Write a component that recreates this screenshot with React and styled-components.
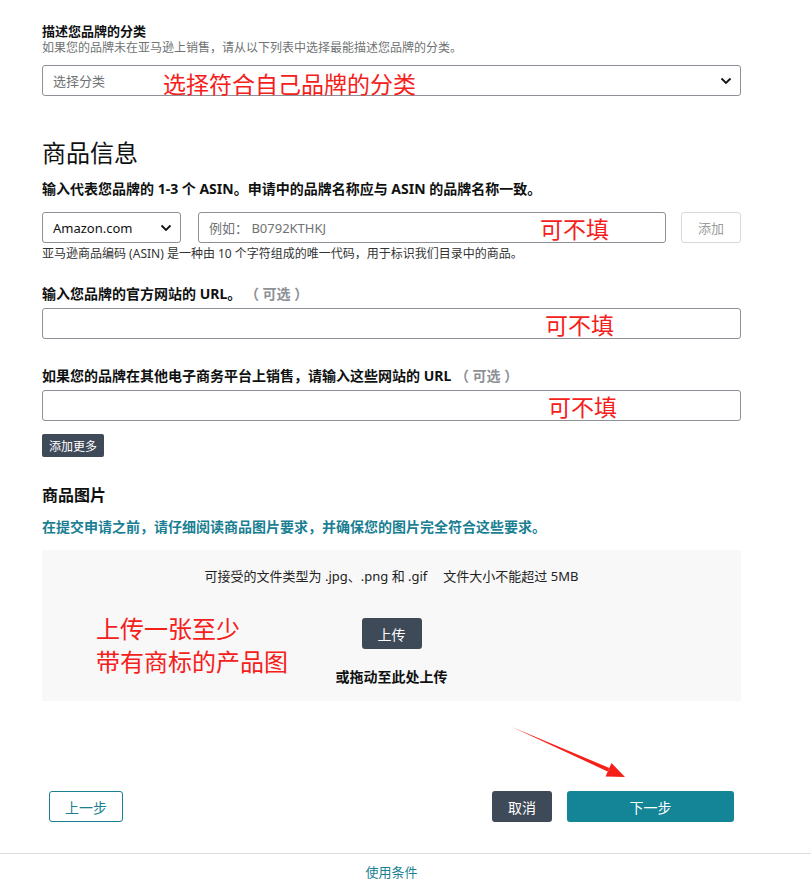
import React from 'react';
import styled, { createGlobalStyle } from 'styled-components';

const GlobalStyle = createGlobalStyle`
  body {
    margin: 0;
    background: #fff;
    color: #0f1111;
    font-family: 'Noto Sans', 'Noto Sans CJK SC', sans-serif;
  }
`;

const Chevron = () => (
  <svg width="12" height="8" viewBox="0 0 12 8">
    <path d="M1.5 1.5 L6 6 L10.5 1.5" fill="none" stroke="#111" strokeWidth="1.8" />
  </svg>
);

const App = () => (
  <Root>
    <GlobalStyle />
    <Page>
      <Label $size={13}>描述您品牌的分类</Label>
      <Help>如果您的品牌未在亚马逊上销售，请从以下列表中选择最能描述您品牌的分类。</Help>
      <Select $mt={9}>
        <Placeholder>选择分类</Placeholder>
        <Chevron />
        <Note $left={120} $top={4}>选择符合自己品牌的分类</Note>
      </Select>

      <Heading>商品信息</Heading>
      <Label $mt={11}>输入代表您品牌的 1-3 个 ASIN。申请中的品牌名称应与 ASIN 的品牌名称一致。</Label>
      <AsinRow>
        <Select $width={139}>
          <span>Amazon.com</span>
          <Chevron />
        </Select>
        <Input>
          <Placeholder>例如： B0792KTHKJ</Placeholder>
          <Note $left={341} $top={2}>可不填</Note>
        </Input>
        <GhostButton>添加</GhostButton>
      </AsinRow>
      <Help $mt={3} $dark>亚马逊商品编码 (ASIN) 是一种由 10 个字符组成的唯一代码，用于标识我们目录中的商品。</Help>

      <Label $mt={23}>输入您品牌的官方网站的 URL。 <Optional>（ 可选 ）</Optional></Label>
      <Input $mt={6}>
        <Note $left={502} $top={2}>可不填</Note>
      </Input>

      <Label $mt={28}>如果您的品牌在其他电子商务平台上销售，请输入这些网站的 URL <Optional>（ 可选 ）</Optional></Label>
      <Input $mt={6}>
        <Note $left={505} $top={2}>可不填</Note>
      </Input>
      <SmallDark>添加更多</SmallDark>

      <SubHeading>商品图片</SubHeading>
      <LinkText>在提交申请之前，请仔细阅读商品图片要求，并确保您的图片完全符合这些要求。</LinkText>

      <DropZone>
        <DropInfo>
          <span>可接受的文件类型为 .jpg、.png 和 .gif</span>
          <span>文件大小不能超过 5MB</span>
        </DropInfo>
        <UploadButton>上传</UploadButton>
        <DropHint>或拖动至此处上传</DropHint>
        <BoxNote>上传一张至少<br />带有商标的产品图</BoxNote>
      </DropZone>

      <Actions>
        <OutlineButton>上一步</OutlineButton>
        <RightGroup>
          <DarkButton>取消</DarkButton>
          <PrimaryButton>下一步</PrimaryButton>
        </RightGroup>
      </Actions>
    </Page>

    <Footer>
      <FooterInner>
        <FooterLink>使用条件</FooterLink>
      </FooterInner>
    </Footer>

    <Arrow width="811" height="892" viewBox="0 0 811 892">
      <polygon points="512,727 609.4,768 607.6,771.4" fill="#f5201a" />
      <polygon points="625,777 605.5,776.5 611.5,763" fill="#f5201a" />
    </Arrow>
  </Root>
);

export default App;

const Root = styled.div`
  position: relative;
  width: 811px;
  min-height: 892px;
`;

const Page = styled.div`
  width: 699px;
  margin-left: 42px;
  padding-top: 23px;
`;

const Label = styled.div`
  margin-top: ${({ $mt }) => $mt || 0}px;
  font-size: ${({ $size }) => $size || 14}px;
  line-height: 17px;
  font-weight: 700;
  color: #0f1111;
  white-space: nowrap;
`;

const Optional = styled.span`
  font-weight: 700;
  color: #8d9096;
`;

const Help = styled.div`
  margin-top: ${({ $mt }) => $mt || 0}px;
  font-size: 12px;
  line-height: 16px;
  color: ${({ $dark }) => ($dark ? '#333' : '#6f7373')};
`;

const Field = styled.div`
  position: relative;
  box-sizing: border-box;
  height: 31px;
  margin-top: ${({ $mt }) => $mt || 0}px;
  border: 1px solid #8d9096;
  border-radius: 3px;
  background: #fff;
  display: flex;
  align-items: center;
  padding: 0 10px;
  font-size: 13px;
  color: #0f1111;
`;

const Select = styled(Field)`
  width: ${({ $width }) => ($width ? `${$width}px` : '100%')};
  flex: none;
  justify-content: space-between;
  padding-right: 8px;
`;

const Input = styled(Field)`
  flex: 1;
`;

const Placeholder = styled.span`
  color: #6f7373;
`;

const Note = styled.span`
  position: absolute;
  left: ${({ $left }) => $left}px;
  top: ${({ $top }) => $top}px;
  font-size: 23px;
  line-height: 26px;
  color: #f5201a;
  font-family: 'Noto Sans CJK SC', sans-serif;
  white-space: nowrap;
`;

const Heading = styled.h2`
  margin: 41px 0 0;
  font-size: 24px;
  line-height: 32px;
  font-weight: 400;
  color: #0f1111;
`;

const AsinRow = styled.div`
  margin-top: 15px;
  display: flex;
  gap: 17px;

  & > button {
    margin-left: -2px;
  }
`;

const GhostButton = styled.button`
  width: 60px;
  height: 31px;
  flex: none;
  border: 1px solid #d5d9d9;
  border-radius: 3px;
  background: #fff;
  color: #9a9c9c;
  font-family: inherit;
  font-size: 13px;
`;

const SmallDark = styled.button`
  display: block;
  margin-top: 13px;
  height: 23px;
  padding: 0 7px;
  border: none;
  border-radius: 2px;
  background: #3f4a58;
  color: #fff;
  font-family: inherit;
  font-size: 12px;
`;

const SubHeading = styled.div`
  margin-top: 27px;
  font-size: 16px;
  line-height: 22px;
  font-weight: 700;
`;

const LinkText = styled.div`
  margin-top: 12px;
  font-size: 14px;
  line-height: 17px;
  font-weight: 700;
  color: #1a7f93;
`;

const DropZone = styled.div`
  position: relative;
  margin-top: 15px;
  height: 151px;
  box-sizing: border-box;
  padding-top: 18px;
  background: #f8f8f8;
  display: flex;
  flex-direction: column;
  align-items: center;
`;

const DropInfo = styled.div`
  display: flex;
  gap: 16px;
  font-size: 13px;
  line-height: 17px;
  color: #222;
`;

const UploadButton = styled.button`
  margin-top: 33px;
  width: 60px;
  height: 31px;
  border: none;
  border-radius: 3px;
  background: #3f4a58;
  color: #fff;
  font-family: inherit;
  font-size: 14px;
`;

const DropHint = styled.div`
  margin-top: 19px;
  font-size: 14px;
  line-height: 17px;
  font-weight: 700;
`;

const BoxNote = styled.div`
  position: absolute;
  left: 54px;
  top: 61px;
  font-size: 24px;
  line-height: 33px;
  color: #f5201a;
  font-family: 'Noto Sans CJK SC', sans-serif;
`;

const Actions = styled.div`
  margin-top: 90px;
  padding: 0 7px;
  display: flex;
  justify-content: space-between;
`;

const RightGroup = styled.div`
  display: flex;
  gap: 15px;
`;

const BaseButton = styled.button`
  height: 31px;
  box-sizing: border-box;
  border-radius: 3px;
  font-family: inherit;
  font-size: 14px;
`;

const OutlineButton = styled(BaseButton)`
  width: 74px;
  border: 1px solid #1a7f93;
  background: #fff;
  color: #1a7f93;
`;

const DarkButton = styled(BaseButton)`
  width: 60px;
  border: none;
  background: #3f4a58;
  color: #fff;
`;

const PrimaryButton = styled(BaseButton)`
  width: 167px;
  border: none;
  background: #148497;
  color: #fff;
`;

const Footer = styled.div`
  margin-top: 31px;
  border-top: 1px solid #dddddd;
  padding-top: 6px;
`;

const FooterInner = styled.div`
  width: 699px;
  margin-left: 42px;
  text-align: center;
`;

const FooterLink = styled.span`
  font-size: 13px;
  line-height: 17px;
  color: #1a7f93;
`;

const Arrow = styled.svg`
  position: absolute;
  left: 0;
  top: 0;
  pointer-events: none;
`;
